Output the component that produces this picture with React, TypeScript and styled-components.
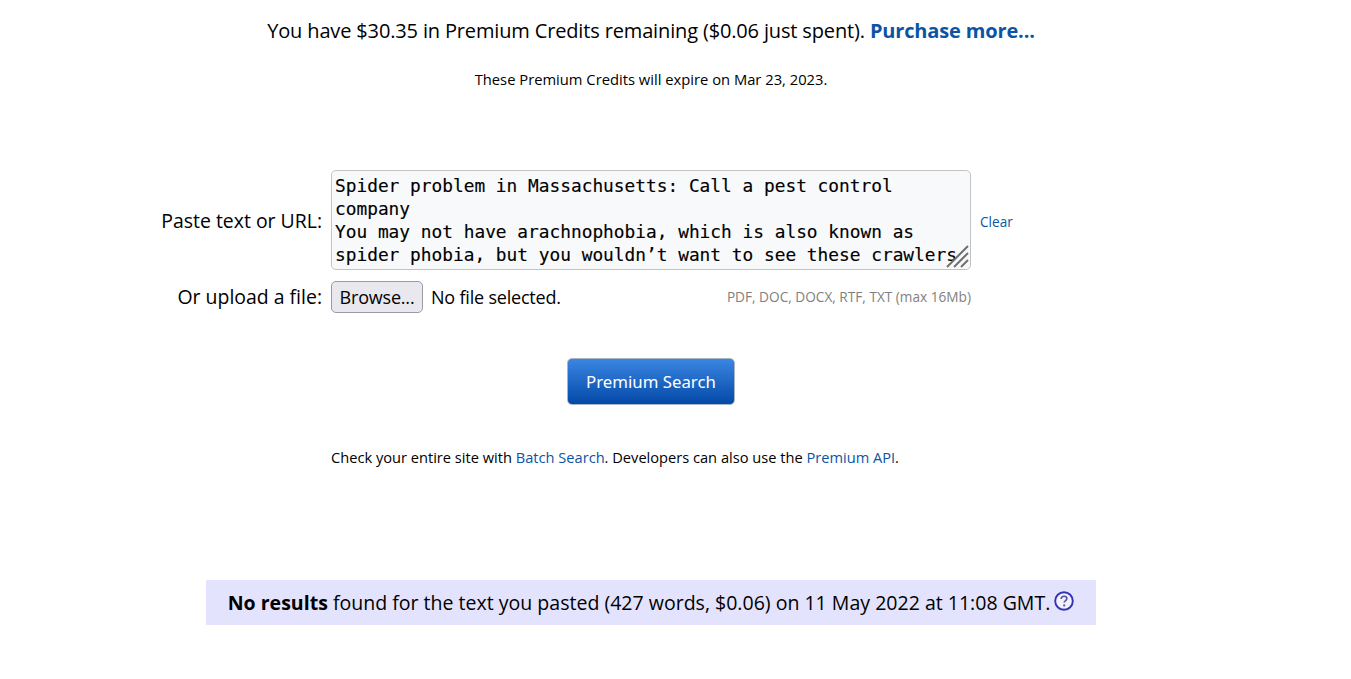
import React from 'react';
import styled, { createGlobalStyle } from 'styled-components';

const GlobalStyle = createGlobalStyle`
  html, body {
    margin: 0;
    padding: 0;
    background: #fff;
    color: #000;
    font-family: "Open Sans", "Noto Sans", sans-serif;
  }
`;

const Page = styled.div`
  width: 1302px;
  height: 679px;
  overflow: hidden;
  display: flex;
  flex-direction: column;
  align-items: center;
`;

const CreditLine = styled.div`
  margin-top: 18px;
  height: 26px;
  line-height: 26px;
  font-size: 20px;
  letter-spacing: -0.15px;
  white-space: nowrap;
`;

const PurchaseLink = styled.a`
  color: #0b54a5;
  font-weight: 700;
  text-decoration: none;
`;

const ExpiryLine = styled.div`
  margin-top: 25px;
  height: 20px;
  line-height: 20px;
  font-size: 14.75px;
  white-space: nowrap;
`;

const Form = styled.div`
  margin-top: 81px;
  width: 890px;
  display: grid;
  grid-template-columns: 116px 640px 1fr;
  column-gap: 9px;
  align-items: center;
`;

const Label = styled.label`
  justify-self: end;
  margin-top: 2px;
  font-size: 19.45px;
  line-height: 24px;
  text-align: right;
  white-space: nowrap;
`;

const PasteWrap = styled.div`
  position: relative;
  width: 640px;
  height: 100px;
`;

const PasteBox = styled.textarea`
  box-sizing: border-box;
  display: block;
  width: 640px;
  height: 100px;
  margin: 0;
  padding: 3px;
  border: 1px solid #c4c4c4;
  border-radius: 5px;
  background: #f8f9fb;
  color: #000;
  font-family: "DejaVu Sans Mono", "Liberation Mono", monospace;
  font-size: 17.82px;
  line-height: 23px;
  -webkit-text-stroke: 0.15px #000;
  overflow: hidden;
  resize: none;
  outline: none;
`;

const Grip = styled.svg`
  position: absolute;
  right: 1px;
  bottom: 1px;
  pointer-events: none;
`;

const ClearLink = styled.a`
  margin-top: 2px;
  color: #0b54a5;
  font-size: 13.6px;
  text-decoration: none;
`;

const FileRow = styled.div`
  display: flex;
  align-items: center;
  justify-content: space-between;
  margin-top: 10px;
  height: 33px;
`;

const FilePick = styled.div`
  display: flex;
  align-items: center;
  gap: 8px;
`;

const BrowseButton = styled.button`
  box-sizing: border-box;
  width: 92px;
  height: 32px;
  padding: 0;
  border: 1px solid #9a9aa6;
  border-radius: 5px;
  background: #e9e8ee;
  color: #000;
  font-family: inherit;
  font-size: 18px;
  letter-spacing: -0.2px;
`;

const FileStatus = styled.span`
  font-size: 18px;
  letter-spacing: -0.2px;
`;

const FileHint = styled.span`
  color: #7f7f7f;
  font-size: 13.65px;
`;

const FileLabel = styled(Label)`
  margin-top: 10px;
`;

const SearchButton = styled.button`
  box-sizing: border-box;
  margin-top: 45px;
  width: 168px;
  height: 47px;
  padding: 0;
  border: 1px solid #a9b4c4;
  border-radius: 5px;
  background: linear-gradient(#3b86e2, #0349a8);
  color: #fff;
  font-family: "Noto Sans", sans-serif;
  font-size: 16.8px;
`;

const LinksLine = styled.div`
  margin-top: 42px;
  width: 640px;
  height: 20px;
  line-height: 20px;
  font-size: 14.63px;
  white-space: nowrap;
`;

const TextLink = styled.a`
  color: #0b54a5;
  text-decoration: none;
`;

const ResultBanner = styled.div`
  margin-top: 113px;
  box-sizing: border-box;
  width: 890px;
  height: 45px;
  display: flex;
  align-items: center;
  justify-content: center;
  gap: 4px;
  background: #e4e3fd;
  font-size: 19.55px;
  white-space: nowrap;
`;

const HelpGlyph = styled.svg`
  margin-top: -3px;
`;

const HelpIcon = () => (
  <HelpGlyph width="20" height="20" viewBox="0 0 20 20" aria-hidden="true">
    <circle cx="10" cy="10" r="8.8" fill="#f2f1ff" stroke="#3232b4" strokeWidth="1.9" />
    <path
      d="M7.2 8c0-1.7 1.2-2.7 2.9-2.7 1.6 0 2.8.9 2.8 2.3 0 1.3-.9 1.8-1.6 2.3-.7.4-1.1.9-1.1 1.7"
      fill="none"
      stroke="#55559a"
      strokeWidth="1.6"
    />
    <circle cx="10.2" cy="14.4" r="1.1" fill="#55559a" />
  </HelpGlyph>
);

const pastedText =
  'Spider problem in Massachusetts: Call a pest control company\nYou may not have arachnophobia, which is also known as spider phobia, but you wouldn\u2019t want to see these crawlers in your home.';

const App = () => {
  return (
    <Page>
      <GlobalStyle />
      <CreditLine>
        You have $30.35 in Premium Credits remaining ($0.06 just spent).{' '}
        <PurchaseLink href="#">Purchase more...</PurchaseLink>
      </CreditLine>
      <ExpiryLine>These Premium Credits will expire on Mar 23, 2023.</ExpiryLine>
      <Form>
        <Label>Paste text or URL:</Label>
        <PasteWrap>
          <PasteBox defaultValue={pastedText} spellCheck={false} />
          <Grip width="24" height="24" viewBox="0 0 24 24" aria-hidden="true">
            <g stroke="#6f6f6f" strokeWidth="2">
              <line x1="1" y1="22" x2="22" y2="1" />
              <line x1="8" y1="22" x2="22" y2="8" />
              <line x1="15" y1="22" x2="22" y2="15" />
            </g>
          </Grip>
        </PasteWrap>
        <ClearLink href="#">Clear</ClearLink>
        <FileLabel>Or upload a file:</FileLabel>
        <FileRow>
          <FilePick>
            <BrowseButton>Browse...</BrowseButton>
            <FileStatus>No file selected.</FileStatus>
          </FilePick>
          <FileHint>PDF, DOC, DOCX, RTF, TXT (max 16Mb)</FileHint>
        </FileRow>
      </Form>
      <SearchButton>Premium Search</SearchButton>
      <LinksLine>
        Check your entire site with <TextLink href="#">Batch Search</TextLink>. Developers can also use the{' '}
        <TextLink href="#">Premium API</TextLink>.
      </LinksLine>
      <ResultBanner>
        <span>
          <b>No results</b> found for the text you pasted (427 words, $0.06) on 11 May 2022 at 11:08 GMT.
        </span>
        <HelpIcon />
      </ResultBanner>
    </Page>
  );
};

export default App;
